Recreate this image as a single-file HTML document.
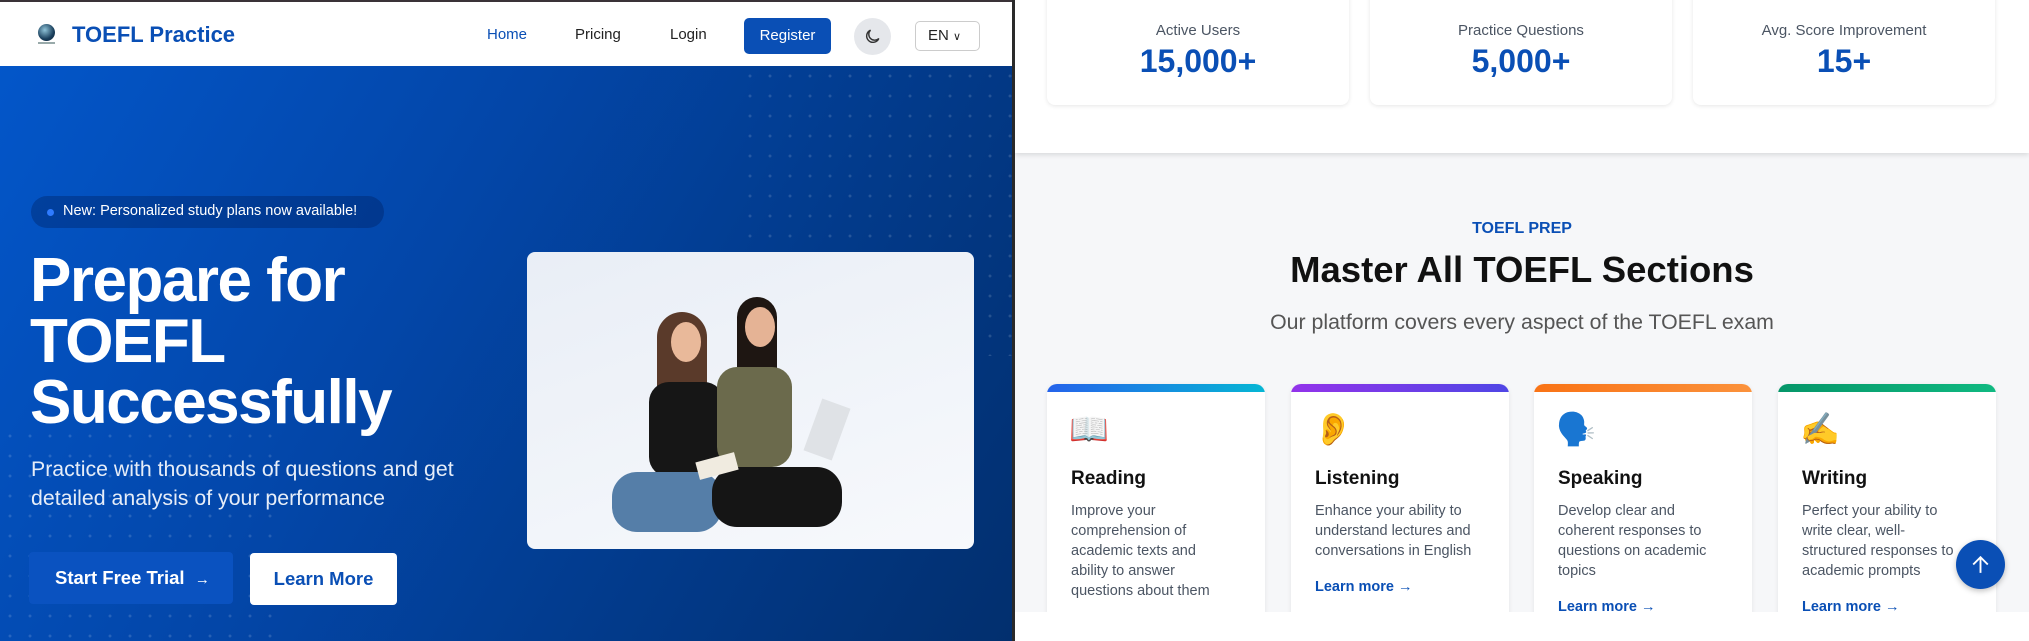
<!DOCTYPE html>
<html><head><meta charset="utf-8">
<style>
*{margin:0;padding:0;box-sizing:border-box}
body{width:2029px;height:641px;overflow:hidden;background:#fff;font-family:"Liberation Sans",sans-serif;position:relative}
.a{position:absolute}
#left{left:0;top:0;width:1012px;height:641px;overflow:hidden;background:#fff;border-top:2px solid #3a3338}
#nav{left:0;top:0;width:1012px;height:64px;background:#fff}
#hero{left:0;top:64px;width:1012px;height:577px;background:linear-gradient(120deg,#0356c9 0%,#0346a8 40%,#023a8a 70%,#022f6e 100%)}
.dots{background-image:radial-gradient(circle,rgba(255,255,255,.14) 1.3px,transparent 1.6px);background-size:20px 20px}
.nl{font-size:15px;color:#222;top:24px}
.white{color:#fff}
.stat{background:#fff;border-radius:8px;box-shadow:0 1px 4px rgba(0,0,0,.1);top:-10px;height:115px;width:302px;text-align:center}
.stat .l{position:absolute;top:32px;width:100%;font-size:15px;color:#4b5563}
.stat .n{position:absolute;top:53px;width:100%;font-size:32px;font-weight:bold;color:#0a4fb5}
.card{top:384px;width:218px;height:240px;background:#fff;border-radius:10px;box-shadow:0 1px 5px rgba(0,0,0,.08);overflow:hidden}
.card .bar{position:absolute;top:0;left:0;right:0;height:8px}
.card .ic{position:absolute;left:22px;top:26px;font-size:32px;font-family:"Noto Color Emoji","DejaVu Sans",sans-serif}
.card .t{position:absolute;left:24px;top:84px;font-size:19px;font-weight:bold;color:#111}
.card .d{position:absolute;left:24px;top:117px;width:166px;font-size:14.5px;line-height:20px;color:#4b5563}
.card .m{position:absolute;left:24px;font-size:14.5px;font-weight:bold;color:#0a4fb5}
</style></head><body>
<div id="left" class="a">
  <div id="nav" class="a">
    <div class="a" style="left:38px;top:22px;width:17px;height:17px;border-radius:50%;background:radial-gradient(circle at 40% 35%,#8fc3d8,#1a3f5c 60%,#0b1f33)"></div>
    <div class="a" style="left:38px;top:40px;width:17px;height:2px;background:#9aa"></div>
    <div class="a" style="left:72px;top:20px;font-size:22px;font-weight:bold;color:#0a4fb5">TOEFL Practice</div>
    <div class="a nl" style="left:487px;color:#0a4fb5">Home</div>
    <div class="a nl" style="left:575px">Pricing</div>
    <div class="a nl" style="left:670px">Login</div>
    <div class="a" style="left:744px;top:16px;width:87px;height:36px;background:#0a4fb5;border-radius:5px;color:#fff;font-size:15px;text-align:center;line-height:36px">Register</div>
    <div class="a" style="left:854px;top:16px;width:37px;height:37px;border-radius:50%;background:#e5e7eb"></div>
    <svg class="a" style="left:863px;top:25px" width="19" height="19" viewBox="0 0 24 24"><path d="M20 14.5A8 8 0 1 1 9.5 4a6.5 6.5 0 0 0 10.5 10.5z" fill="none" stroke="#333" stroke-width="1.8"/></svg>
    <div class="a" style="left:915px;top:19px;width:65px;height:30px;border:1px solid #ccc;border-radius:5px;font-size:15px;color:#222;line-height:28px;padding-left:12px">EN <span style="font-size:11px">&#8744;</span></div>
  </div>
  <div id="hero" class="a">
    <div class="a dots" style="left:740px;top:0;width:272px;height:290px"></div>
    <div class="a dots" style="left:0;top:360px;width:275px;height:217px"></div>
    <div class="a" style="left:31px;top:130px;width:353px;height:32px;border-radius:16px;background:rgba(0,30,90,.35)"></div>
    <div class="a" style="left:47px;top:143px;width:7px;height:7px;border-radius:50%;background:#2f7bff"></div>
    <div class="a white" style="left:63px;top:137px;font-size:14.5px">New: Personalized study plans now available!</div>
    <div class="a white" style="left:30px;top:184px;font-size:62px;font-weight:bold;line-height:61px;letter-spacing:-1.5px">Prepare for<br>TOEFL<br>Successfully</div>
    <div class="a" style="left:31px;top:389px;font-size:21.3px;line-height:29px;color:#e6edf8">Practice with thousands of questions and get<br>detailed analysis of your performance</div>
    <div class="a white" style="left:29px;top:486px;width:204px;height:52px;background:#0a52c0;border-radius:4px;font-size:18.5px;font-weight:bold;line-height:52px;padding-left:26px">Start Free Trial &nbsp;<span style="font-size:15px">&#8594;</span></div>
    <div class="a" style="left:250px;top:487px;width:147px;height:52px;background:#fff;border-radius:4px;font-size:18.5px;font-weight:bold;color:#0a4fb5;line-height:52px;text-align:center">Learn More</div>
    <div class="a" style="left:527px;top:186px;width:447px;height:297px;border-radius:8px;background:linear-gradient(160deg,#e9eef6,#f7f9fc);overflow:hidden">
      <div class="a" style="left:130px;top:60px;width:50px;height:100px;border-radius:25px 25px 5px 5px;background:#5a3a2a"></div>
      <div class="a" style="left:210px;top:45px;width:40px;height:90px;border-radius:20px 20px 5px 5px;background:#1e1612"></div>
      <div class="a" style="left:144px;top:70px;width:30px;height:40px;border-radius:50%;background:#e9b99a"></div>
      <div class="a" style="left:218px;top:55px;width:30px;height:40px;border-radius:50%;background:#e5b395"></div>
      <div class="a" style="left:122px;top:130px;width:75px;height:95px;border-radius:20px;background:#161616"></div>
      <div class="a" style="left:190px;top:115px;width:75px;height:100px;border-radius:20px;background:#6b6a4c"></div>
      <div class="a" style="left:85px;top:220px;width:110px;height:60px;border-radius:25px;background:#557ea8"></div>
      <div class="a" style="left:185px;top:215px;width:130px;height:60px;border-radius:25px;background:#151515"></div>
      <div class="a" style="left:170px;top:205px;width:40px;height:18px;background:#f0ebe0;transform:rotate(-15deg)"></div>
      <div class="a" style="left:285px;top:150px;width:30px;height:55px;background:#dfe2e6;transform:rotate(20deg)"></div>
    </div>
  </div>
</div>
<div class="a" style="left:1012px;top:0;width:3px;height:641px;background:#2a2a2a"></div>
<div class="a" style="left:1015px;top:0;width:1014px;height:612px;background:#f6f7f9;overflow:hidden">
  <div class="a" style="left:0;top:0;width:1014px;height:153px;background:#fff;box-shadow:0 2px 5px rgba(0,0,0,.12)"></div>
  <div class="a stat" style="left:32px"><div class="l">Active Users</div><div class="n">15,000+</div></div>
  <div class="a stat" style="left:355px"><div class="l">Practice Questions</div><div class="n">5,000+</div></div>
  <div class="a stat" style="left:678px"><div class="l">Avg. Score Improvement</div><div class="n">15+</div></div>
  <div class="a" style="left:0;width:1014px;top:220px;text-align:center;font-size:16px;font-weight:bold;color:#0a4fb5">TOEFL PREP</div>
  <div class="a" style="left:0;width:1014px;top:249px;text-align:center;font-size:36.5px;font-weight:bold;color:#111">Master All TOEFL Sections</div>
  <div class="a" style="left:0;width:1014px;top:310px;text-align:center;font-size:21.3px;color:#555">Our platform covers every aspect of the TOEFL exam</div>
  <div class="a card" style="left:32px"><div class="bar" style="background:linear-gradient(90deg,#2563eb,#06b6d4)"></div><div class="ic">📖</div><div class="t">Reading</div><div class="d">Improve your comprehension of academic texts and ability to answer questions about them</div></div>
  <div class="a card" style="left:276px"><div class="bar" style="background:linear-gradient(90deg,#9333ea,#4f46e5)"></div><div class="ic">👂</div><div class="t">Listening</div><div class="d">Enhance your ability to understand lectures and conversations in English</div><div class="m" style="top:195px">Learn more &#8594;</div></div>
  <div class="a card" style="left:519px"><div class="bar" style="background:linear-gradient(90deg,#f97316,#fb923c)"></div><div class="ic">🗣️</div><div class="t">Speaking</div><div class="d">Develop clear and coherent responses to questions on academic topics</div><div class="m" style="top:215px">Learn more &#8594;</div></div>
  <div class="a card" style="left:763px"><div class="bar" style="background:linear-gradient(90deg,#059669,#10b981)"></div><div class="ic">✍️</div><div class="t">Writing</div><div class="d">Perfect your ability to write clear, well-structured responses to academic prompts</div><div class="m" style="top:215px">Learn more &#8594;</div></div>
</div>
<div class="a" style="left:1956px;top:540px;width:49px;height:49px;border-radius:50%;background:#0a4fb5;box-shadow:0 2px 6px rgba(0,0,0,.25)"></div>
<svg class="a" style="left:1968px;top:552px" width="25" height="25" viewBox="0 0 24 24"><path d="M12 20V5M5 12l7-7 7 7" fill="none" stroke="#fff" stroke-width="1.8"/></svg>
</body></html>
